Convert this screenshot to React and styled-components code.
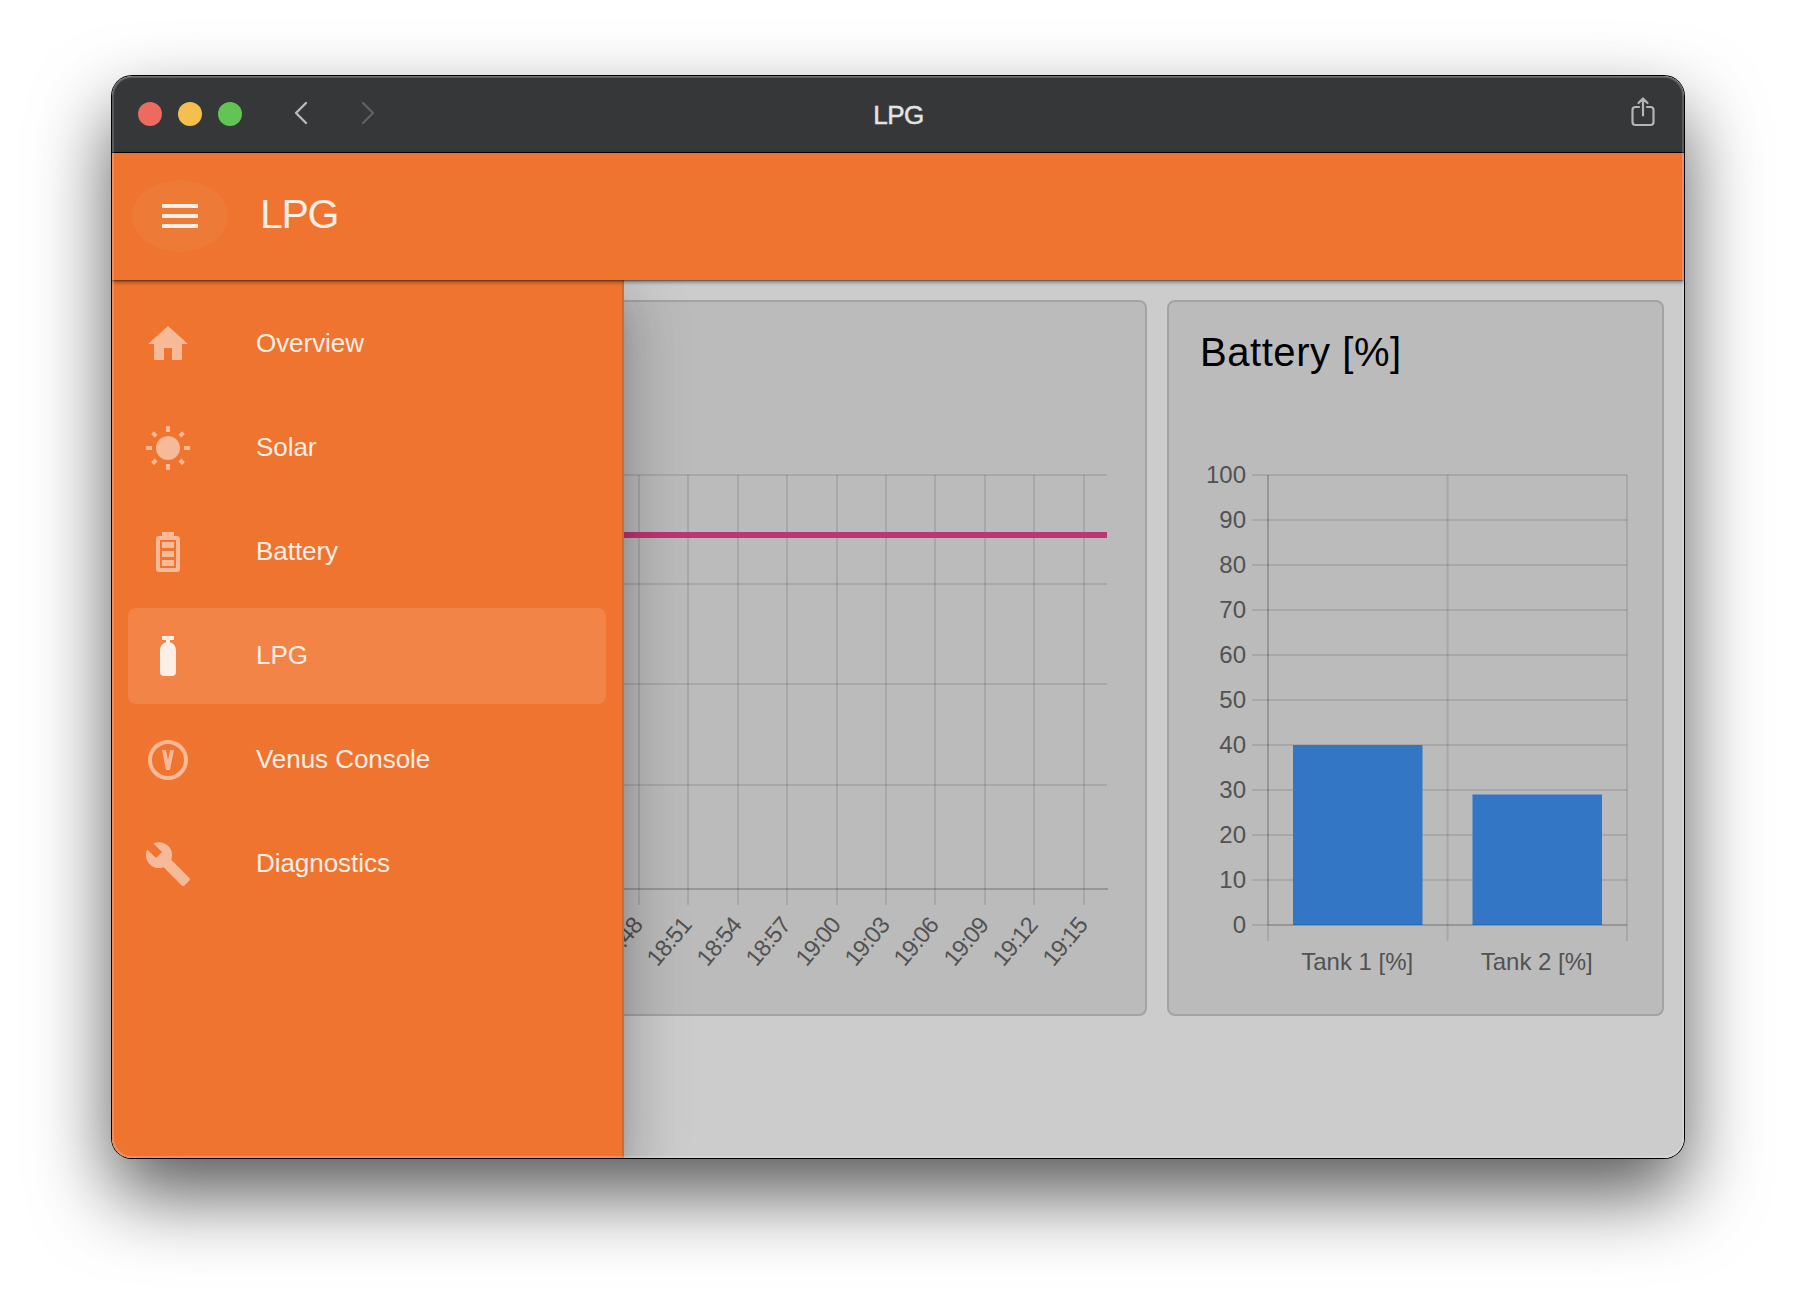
import React from "react";
import styled, { createGlobalStyle } from "styled-components";

const FONT = '"Liberation Sans", Arial, Helvetica, sans-serif';
const ORANGE = "#ef7430";

const GlobalStyle = createGlobalStyle`
  *, *::before, *::after { box-sizing: border-box; }
  html, body { margin: 0; padding: 0; background: #fff; }
  body { font-family: ${FONT}; overflow: hidden; }
`;

const Desktop = styled.div`
  width: 1796px;
  height: 1306px;
  padding: 76px 112px 148px;
  background: #fff;
  overflow: hidden;
`;

const Window = styled.div`
  position: relative;
  display: flex;
  flex-direction: column;
  width: 1572px;
  height: 1082px;
  border-radius: 20px;
  box-shadow: 0 0 0 1px #000, 0 36px 78px rgba(0, 0, 0, 0.66);
`;

const WindowClip = styled.div`
  display: flex;
  flex-direction: column;
  flex: 1;
  min-height: 0;
  border-radius: 20px;
  overflow: hidden;
`;

const WindowEdge = styled.div`
  position: absolute;
  inset: 0;
  border-radius: 20px;
  pointer-events: none;
  box-shadow: inset 0 0 0 2px rgba(255, 255, 255, 0.18), inset 0 1px 0 rgba(255, 255, 255, 0.14);
  z-index: 10;
`;

const TitleBar = styled.div`
  display: grid;
  grid-template-columns: 1fr auto 1fr;
  align-items: center;
  flex: none;
  height: 77px;
  padding: 0 26px 1px 26px;
  background: #363738;
  border-bottom: 1px solid #000;
`;

const TitleLeft = styled.div`
  display: flex;
  align-items: center;
`;

const Light = styled.span`
  width: 24px;
  height: 24px;
  margin-right: 16px;
  border-radius: 50%;
  background: ${(p) => p.$color};
`;

const NavGlyph = styled.svg`
  width: 16px;
  height: 26px;
  margin: 0 0 2px ${(p) => p.$gap}px;
  fill: none;
  stroke: ${(p) => p.$color};
  stroke-width: 2.4;
  stroke-linecap: round;
  stroke-linejoin: round;
`;

const WindowTitle = styled.div`
  padding: 2px 0 0 1px;
  color: #e4e4e4;
  font-size: 26px;
  line-height: 30px;
  letter-spacing: -0.5px;
  -webkit-text-stroke: 0.5px #e4e4e4;
`;

const ShareGlyph = styled.svg`
  justify-self: end;
  width: 26px;
  height: 32px;
  margin: 0 2px 3px 0;
  fill: none;
  stroke: #b4b5b5;
  stroke-width: 2.2;
  stroke-linecap: round;
  stroke-linejoin: round;
`;

const AppBar = styled.header`
  position: relative;
  z-index: 3;
  display: flex;
  align-items: center;
  flex: none;
  height: 127px;
  padding: 0 20px 0 20px;
  background: ${ORANGE};
  box-shadow: 0 2px 4px rgba(0, 0, 0, 0.45), 0 1px 1px rgba(0, 0, 0, 0.25);
`;

const MenuButton = styled.button`
  display: flex;
  align-items: center;
  justify-content: center;
  width: 96px;
  height: 72px;
  margin-bottom: 1px;
  padding: 0;
  border: 0;
  border-radius: 50%;
  background: #ee7a38;
`;

const AppTitle = styled.h1`
  margin: 0 0 5px 32px;
  color: #fdeee6;
  font-size: 41px;
  font-weight: 400;
  line-height: 48px;
  letter-spacing: -1.3px;
`;

const Body = styled.div`
  position: relative;
  display: flex;
  flex: 1;
  min-height: 0;
  background: #ccc;
`;

const Drawer = styled.nav`
  position: absolute;
  z-index: 2;
  top: 0;
  bottom: 0;
  left: 0;
  display: flex;
  flex-direction: column;
  gap: 8px;
  width: 512px;
  padding: 16px;
  border-right: 2px solid #d1682d;
  background: ${ORANGE};
  box-shadow: 0 16px 20px -10px rgba(0, 0, 0, 0.2), 0 32px 48px 4px rgba(0, 0, 0, 0.14),
    0 12px 60px 10px rgba(0, 0, 0, 0.12);
`;

const DrawerItem = styled.a`
  display: flex;
  align-items: center;
  gap: 64px;
  height: 96px;
  padding: 0 16px;
  border-radius: 8px;
  background: ${(p) => (p.$active ? "#f18446" : "transparent")};
  color: ${(p) => (p.$active ? "#fdeee6" : "#f7ba99")};
`;

const DrawerLabel = styled.span`
  margin-bottom: 2px;
  color: #fdeee6;
  font-size: 26px;
  line-height: 40px;
  letter-spacing: -0.05px;
`;

const Icon = styled.svg`
  flex: none;
  width: 48px;
  height: 48px;
  fill: currentColor;
  color: ${(p) => p.$color || "inherit"};
`;

const Content = styled.main`
  display: grid;
  grid-template-columns: 1015px 497px;
  gap: 20px;
  align-items: start;
  padding: 20px;
`;

const Card = styled.section`
  display: flex;
  flex-direction: column;
  height: 716px;
  overflow: hidden;
  border: 2px solid #a3a3a3;
  border-radius: 8px;
  background: #bbb;
`;

const CardTitle = styled.h2`
  height: 98px;
  margin: 0;
  padding: 26px 30px 0 31px;
  color: #000;
  font-size: 40px;
  font-weight: 400;
  line-height: 48px;
  letter-spacing: 0.55px;
`;

const Chart = styled.svg`
  display: block;
  flex: none;
  width: ${(p) => p.$w}px;
  height: 600px;
  font-family: ${FONT};
  font-size: 24px;
`;

const TimeLabel = styled.text`
  font-size: 23.5px;
  letter-spacing: -0.9px;
`;

const GRID = "rgba(0,0,0,0.1)";
const AXIS = "rgba(0,0,0,0.19)";
const TICK = "#525252";

const PATHS = {
  menu: "M3,6H21V8H3V6M3,11H21V13H3V11M3,16H21V18H3V16Z",
  home: "M10,20V14H14V20H19V12H22L12,3L2,12H5V20H10Z",
  sun: "M3.55,19.09L4.96,20.5L6.76,18.71L5.34,17.29M12,6A6,6 0 0,0 6,12A6,6 0 0,0 12,18A6,6 0 0,0 18,12C18,8.68 15.31,6 12,6M20,13H23V11H20M17.24,18.71L19.04,20.5L20.45,19.09L18.66,17.29M20.45,5L19.04,3.6L17.24,5.39L18.66,6.81M13,1H11V4H13M6.76,5.39L4.96,3.6L3.55,5L5.34,6.81L6.76,5.39M1,13H4V11H1M13,20H11V23H13",
  battery:
    "M16,20H8V6H16M16.67,4H15V2H9V4H7.33A1.33,1.33 0 0,0 6,5.33V20.67C6,21.4 6.6,22 7.33,22H16.67A1.33,1.33 0 0,0 18,20.67V5.33C18,4.6 17.4,4 16.67,4M15,16H9V19H15V16M15,7H9V10H15V7M15,11.5H9V14.5H15V11.5Z",
  cylinder:
    "M16,9V20A2,2 0 0,1 14,22H10A2,2 0 0,1 8,20V9C8,7.14 9.27,5.57 11,5.13V4H9V2H15V4H13V5.13C14.73,5.57 16,7.14 16,9Z",
  venus:
    "M9,7L11,17H13L15,7H13L12,12L11,7H9M12,2A10,10 0 0,1 22,12A10,10 0 0,1 12,22A10,10 0 0,1 2,12A10,10 0 0,1 12,2M12,4A8,8 0 0,0 4,12A8,8 0 0,0 12,20A8,8 0 0,0 20,12A8,8 0 0,0 12,4Z",
  wrench:
    "M22.7,19L13.6,9.9C14.5,7.6 14,4.9 12.1,3C10.1,1 7.1,0.6 4.7,1.7L9,6L6,9L1.6,4.7C0.4,7.1 0.9,10.1 2.9,12.1C4.8,14 7.5,14.5 9.8,13.6L18.9,22.7C19.3,23.1 19.9,23.1 20.3,22.7L22.6,20.4C23.1,20 23.1,19.3 22.7,19Z",
};

const ITEMS = [
  ["Overview", "home"],
  ["Solar", "sun"],
  ["Battery", "battery"],
  ["LPG", "cylinder"],
  ["Venus Console", "venus"],
  ["Diagnostics", "wrench"],
];

function Glyph({ name, color }) {
  return (
    <Icon viewBox="0 0 24 24" $color={color}>
      <path d={PATHS[name]} />
    </Icon>
  );
}

/* History of the tank level; its coordinates start at the card's inner left edge. */
const TIMES = ["18:30", "18:33", "18:36", "18:39", "18:42", "18:45", "18:48", "18:51", "18:54", "18:57", "19:00", "19:03", "19:06", "19:09", "19:12", "19:15"];
const LEVELS = [75, 184, 284, 385];

function HistoryChart() {
  const xs = TIMES.map((_, i) => Math.floor(950 - (TIMES.length - 1 - i) * 49.4));
  return (
    <Chart $w={1011} viewBox="0 0 1011 600">
      <g stroke={GRID} strokeWidth="2">
        {LEVELS.map((y) => (
          <line key={y} x1="100" x2="973" y1={y} y2={y} />
        ))}
        {xs.map((x) => (
          <line key={x} x1={x} x2={x} y1="75" y2="505" />
        ))}
      </g>
      <line x1="100" x2="974" y1="489" y2="489" stroke={AXIS} strokeWidth="2" />
      <line x1="100" x2="973" y1="135" y2="135" stroke="#bc3671" strokeWidth="6" />
      <g fill={TICK} textAnchor="end">
        {xs.map((x, i) => (
          <TimeLabel key={x} transform={`translate(${x + 4.5} 526) rotate(-50)`}>
            {TIMES[i]}
          </TimeLabel>
        ))}
      </g>
    </Chart>
  );
}

const TANKS = [
  { name: "Tank 1 [%]", value: 40 },
  { name: "Tank 2 [%]", value: 29 },
];

function TankChart() {
  const left = 99;
  const band = 179.5;
  const base = 525;
  return (
    <Chart $w={493} viewBox="0 0 493 600">
      <g stroke={GRID} strokeWidth="2">
        {Array.from({ length: 11 }, (_, i) => (
          <line key={i} x1="83" x2="458" y1={base - i * 45} y2={base - i * 45} />
        ))}
        <line x1="99" x2="99" y1="75" y2="541" />
        <line x1="278.5" x2="278.5" y1="75" y2="541" />
        <line x1="458" x2="458" y1="75" y2="541" />
      </g>
      {TANKS.map((t, i) => (
        <rect key={t.name} x={left + band * i + 25} width="129.5" y={base - t.value * 4.5} height={t.value * 4.5} fill="#3276c5" />
      ))}
      <g stroke={GRID} strokeWidth="2">
        <line x1="99" x2="99" y1="75" y2="525" />
        <line x1="99" x2="458" y1="525" y2="525" />
      </g>
      <g fill={TICK} textAnchor="end">
        {Array.from({ length: 11 }, (_, i) => (
          <text key={i} x="77" y={base - i * 45 + 8}>
            {i * 10}
          </text>
        ))}
      </g>
      <g fill={TICK} textAnchor="middle">
        {TANKS.map((t, i) => (
          <text key={t.name} x={left + band * (i + 0.5) - 0.5} y="570">
            {t.name}
          </text>
        ))}
      </g>
    </Chart>
  );
}

export default function App() {
  return (
    <Desktop>
      <GlobalStyle />
      <Window>
        <WindowClip>
          <TitleBar>
            <TitleLeft>
              <Light $color="#ec6a5e" />
              <Light $color="#f4bf4f" />
              <Light $color="#61c554" />
              <NavGlyph $gap={35} $color="#b9baba" viewBox="0 0 16 26">
                <path d="M13 3L3 13L13 23" />
              </NavGlyph>
              <NavGlyph $gap={51} $color="#5f6061" viewBox="0 0 16 26">
                <path d="M3 3L13 13L3 23" />
              </NavGlyph>
            </TitleLeft>
            <WindowTitle>LPG</WindowTitle>
            <ShareGlyph viewBox="0 0 26 32">
              <path d="M9 11H5.5A3 3 0 0 0 2.5 14V26A3 3 0 0 0 5.5 29H20.5A3 3 0 0 0 23.5 26V14A3 3 0 0 0 20.5 11H17M13 19.5V2.8M8.5 7L13 2.5L17.5 7" />
            </ShareGlyph>
          </TitleBar>
          <AppBar>
            <MenuButton aria-label="Menu">
              <Glyph name="menu" color="#fdeee6" />
            </MenuButton>
            <AppTitle>LPG</AppTitle>
          </AppBar>
          <Body>
            <Drawer>
              {ITEMS.map(([label, icon]) => (
                <DrawerItem key={label} $active={label === "LPG"}>
                  <Glyph name={icon} />
                  <DrawerLabel>{label}</DrawerLabel>
                </DrawerItem>
              ))}
            </Drawer>
            <Content>
              <Card>
                <CardTitle />
                <HistoryChart />
              </Card>
              <Card>
                <CardTitle>Battery [%]</CardTitle>
                <TankChart />
              </Card>
            </Content>
          </Body>
        </WindowClip>
        <WindowEdge />
      </Window>
    </Desktop>
  );
}
